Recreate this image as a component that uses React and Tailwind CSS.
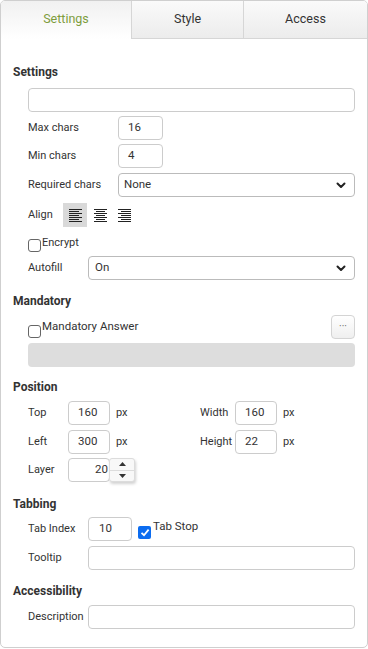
import React from 'react';

const font = { fontFamily: 'Roboto, "Liberation Sans", sans-serif' };

function Heading({ children, className = '' }) {
  return <div className={`h-4 leading-4 text-[12px] font-bold text-[#333] ${className}`}>{children}</div>;
}

function Box({ value = '', className = '' }) {
  return (
    <div className={`h-6 border border-[#cccccc] rounded-[4px] bg-white flex items-center text-[11.5px] text-[#333] ${className}`}>
      {value}
    </div>
  );
}

function Chevron() {
  return (
    <svg width="10" height="7" viewBox="0 0 10 7" className="ml-auto mr-[8px]">
      <path d="M1.5 1.5 L5 5 L8.5 1.5" fill="none" stroke="#222" strokeWidth="2" strokeLinecap="round" strokeLinejoin="round" />
    </svg>
  );
}

function Select({ value, className = '' }) {
  return (
    <div className={`h-6 border border-[#bbbbbb] rounded-[4px] bg-white flex items-center text-[11.5px] text-[#333] pl-[5px] ${className}`}>
      <span>{value}</span>
      <Chevron />
    </div>
  );
}

function Check({ checked }) {
  if (checked) {
    return (
      <span className="w-[13px] h-[13px] rounded-[2px] bg-[#0b6cf0] flex items-center justify-center shrink-0">
        <svg width="10" height="9" viewBox="0 0 10 9">
          <path d="M1.5 4.8 L4 7.2 L8.6 1.6" fill="none" stroke="white" strokeWidth="1.8" />
        </svg>
      </span>
    );
  }
  return <span className="block w-[13px] h-[13px] rounded-[3px] border border-[#666] bg-white shrink-0" />;
}

function AlignIcon({ type }) {
  const rows = [0, 1, 2, 3, 4, 5, 6];
  return (
    <svg width="13" height="13" viewBox="0 0 13 13">
      {rows.map((i) => {
        const ww = type === 'center' ? (i % 2 ? 9 : 13) : (i % 2 ? 10 : 13);
        const x = type === 'left' ? 0 : type === 'center' ? (13 - ww) / 2 : 13 - ww;
        return <rect key={i} x={x} y={i * 2} width={ww} height="1" fill="#222" />;
      })}
    </svg>
  );
}

export default function App() {
  return (
    <div style={font} className="w-[368px] h-[649px] bg-white">
      <div className="w-[368px] h-[648px] border border-[#cfcfcf] rounded-[5px] overflow-hidden flex flex-col">
        {/* tabs */}
        <div className="flex h-[38px] shrink-0 text-[12.5px]">
          <div className="w-[130px] flex items-center justify-center bg-gradient-to-b from-[#f1f1f1] to-white text-[#7d9d3c] pb-[1px]">Settings</div>
          <div className="w-[112px] flex items-center justify-center border-l border-b border-[#d6d6d6] bg-gradient-to-b from-[#fafafa] to-[#ececec] text-[#333]">Style</div>
          <div className="flex-1 flex items-center justify-center border-l border-b border-[#d6d6d6] bg-gradient-to-b from-[#fafafa] to-[#ececec] text-[#333]">Access</div>
        </div>

        <div className="pl-[12px] pr-[12px] text-[11px] text-[#333]">
          <Heading className="mt-[25px]">Settings</Heading>
          <div className="pl-[15px]">
            <Box className="mt-[8px]" />
            <div className="flex items-center mt-[4px]">
              <span className="w-[90px]">Max chars</span>
              <Box value="16" className="w-[45px] pl-[9px]" />
            </div>
            <div className="flex items-center mt-[4px]">
              <span className="w-[90px]">Min chars</span>
              <Box value="4" className="w-[45px] pl-[9px]" />
            </div>
            <div className="flex items-center mt-[5px]">
              <span className="w-[90px]">Required chars</span>
              <Select value="None" className="flex-1" />
            </div>
            <div className="flex items-center mt-[6px] h-6">
              <span className="w-[35px]">Align</span>
              <span className="w-6 h-6 bg-[#d9d9d9] flex items-center justify-center"><AlignIcon type="left" /></span>
              <span className="w-6 h-6 flex items-center justify-center ml-[1px]"><AlignIcon type="center" /></span>
              <span className="w-6 h-6 flex items-center justify-center"><AlignIcon type="right" /></span>
            </div>
            <div className="flex items-center mt-[11px] h-[14px]">
              <Check />
              <span className="ml-[1px] -mt-[4px]">Encrypt</span>
            </div>
            <div className="flex items-center mt-[4px]">
              <span className="w-[60px]">Autofill</span>
              <Select value="On" className="flex-1 pl-[6px]" />
            </div>
          </div>

          <Heading className="mt-[13px]">Mandatory</Heading>
          <div className="pl-[15px]">
            <div className="flex items-center mt-[6px] h-6">
              <span className="mt-[8px]"><Check /></span>
              <span className="ml-[1px] text-[11.5px]">Mandatory Answer</span>
              <span className="ml-auto w-6 h-6 rounded-[4px] border border-[#d4d4d4] bg-gradient-to-b from-white to-[#efefef] flex items-center justify-center text-[10px] text-[#666] leading-none">···</span>
            </div>
            <div className="mt-[4px] h-6 rounded-[4px] bg-[#dddddd]" />
          </div>

          <Heading className="mt-[12px]">Position</Heading>
          <div className="pl-[15px]">
            <div className="flex items-center mt-[6px]">
              <span className="w-[40px]">Top</span>
              <Box value="160" className="w-[42px] pl-[9px]" />
              <span className="ml-[6px] w-[84px]">px</span>
              <span className="w-[35px]">Width</span>
              <Box value="160" className="w-[42px] pl-[9px]" />
              <span className="ml-[6px]">px</span>
            </div>
            <div className="flex items-center mt-[5px]">
              <span className="w-[40px]">Left</span>
              <Box value="300" className="w-[42px] pl-[9px]" />
              <span className="ml-[6px] w-[84px]">px</span>
              <span className="w-[35px]">Height</span>
              <Box value="22" className="w-[42px] pl-[9px]" />
              <span className="ml-[6px]">px</span>
            </div>
            <div className="flex items-center mt-[4px]">
              <span className="w-[40px]">Layer</span>
              <div className="flex h-6">
                <div className="w-[42px] h-6 border border-[#cccccc] rounded-[4px] flex items-center justify-end pr-[1px] text-[11.5px]">20</div>
                <div className="-ml-[1px] w-[26px] h-[24px] flex flex-col rounded-[3px] border border-[#dcdcdc] bg-[#f8f8f8] shadow-[1px_2px_3px_rgba(0,0,0,0.18)]">
                  <div className="flex-1 flex items-center justify-center border-b border-[#dcdcdc]">
                    <svg width="7" height="4" viewBox="0 0 7 4"><path d="M0 4 L3.5 0 L7 4Z" fill="#333" /></svg>
                  </div>
                  <div className="flex-1 flex items-center justify-center">
                    <svg width="7" height="4" viewBox="0 0 7 4"><path d="M0 0 L7 0 L3.5 4Z" fill="#333" /></svg>
                  </div>
                </div>
              </div>
            </div>
          </div>

          <Heading className="mt-[14px]">Tabbing</Heading>
          <div className="pl-[15px]">
            <div className="flex items-center mt-[5px]">
              <span className="w-[60px]">Tab Index</span>
              <Box value="10" className="w-[44px] pl-[10px]" />
              <span className="ml-[6px] mt-[6px]"><Check checked /></span>
              <span className="ml-[2px] -mt-[4px] text-[11.5px]">Tab Stop</span>
            </div>
            <div className="flex items-center mt-[5px]">
              <span className="w-[60px]">Tooltip</span>
              <Box className="flex-1" />
            </div>
          </div>

          <Heading className="mt-[13px]">Accessibility</Heading>
          <div className="pl-[15px]">
            <div className="flex items-center mt-[6px]">
              <span className="w-[60px]">Description</span>
              <Box className="flex-1" />
            </div>
          </div>
        </div>
      </div>
    </div>
  );
}
